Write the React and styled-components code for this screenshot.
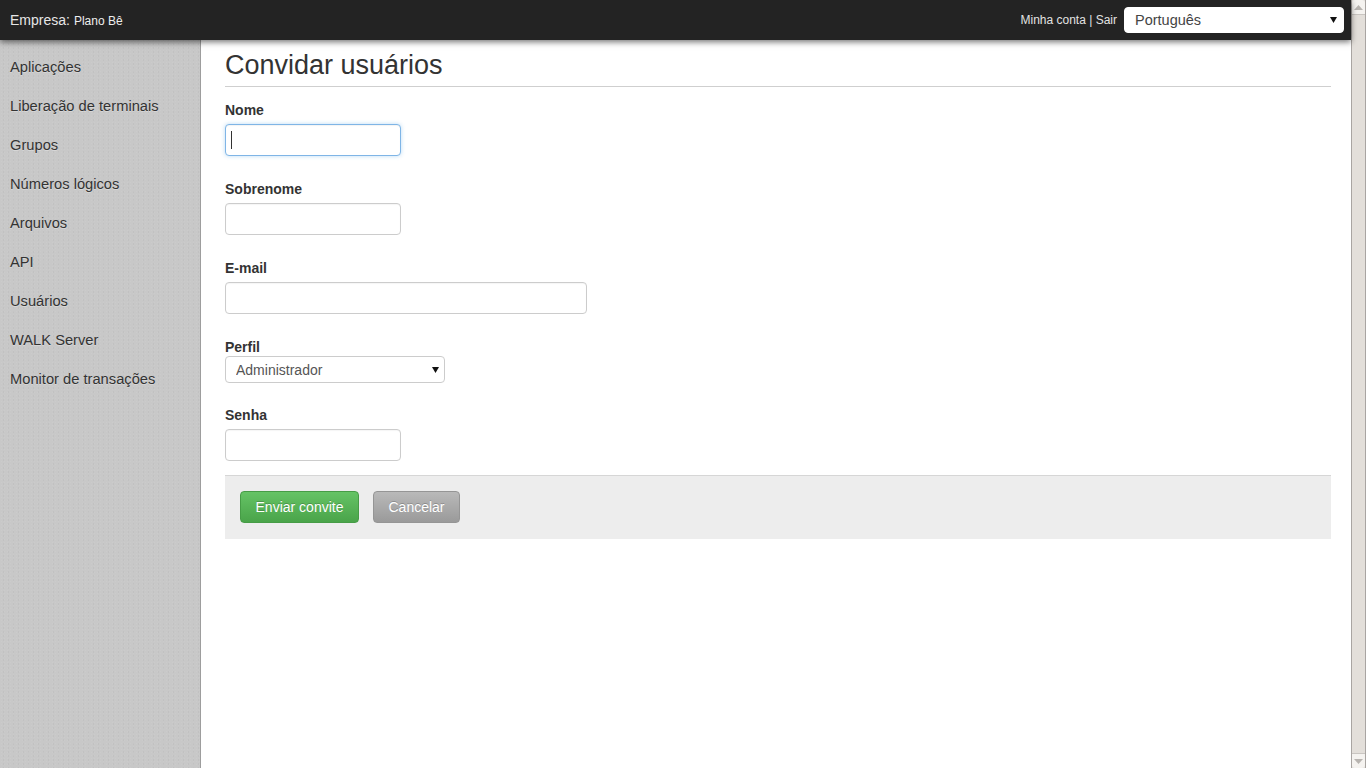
import React from "react";
import styled, { createGlobalStyle, css } from "styled-components";

const Global = createGlobalStyle`
  html, body { margin: 0; padding: 0; height: 100%; overflow: hidden; }
  body { font-family: "Liberation Sans", Arial, sans-serif; color: #333; background: #fff; }
  * { box-sizing: border-box; }
`;

const Shell = styled.div`
  display: flex;
  width: 1366px;
  height: 768px;
  overflow: hidden;
`;

const Page = styled.div`
  flex: 1;
  display: flex;
  flex-direction: column;
  min-width: 0;
`;

const Header = styled.header`
  position: relative;
  z-index: 2;
  height: 40px;
  flex: 0 0 40px;
  background: #232323;
  box-shadow: 0 2px 6px rgba(0, 0, 0, 0.55);
  display: flex;
  align-items: center;
  justify-content: space-between;
  padding: 0 7px 0 10px;
`;

const Brand = styled.div`
  color: #e6e6e6;
  font-size: 14px;
  display: flex;
  align-items: baseline;
  gap: 4px;
`;

const BrandName = styled.span`
  font-size: 12px;
  color: #eee;
`;

const HeaderRight = styled.div`
  display: flex;
  align-items: center;
  gap: 7px;
`;

const AccountLinks = styled.div`
  color: #e2e2e2;
  font-size: 12px;
`;

const SelectWrap = styled.div`
  position: relative;
  width: ${(p) => p.$w}px;
  height: ${(p) => p.$h}px;
`;

const NativeSelect = styled.select`
  appearance: none;
  -webkit-appearance: none;
  width: 100%;
  height: 100%;
  border: 1px solid #ccc;
  border-radius: 4px;
  background: #fff;
  font-family: "Liberation Sans", Arial, sans-serif;
  font-size: ${(p) => p.$fs || 14}px;
  color: ${(p) => p.$color || "#555"};
  padding: 0 0 0 ${(p) => p.$pad}px;
  outline: none;
  ${(p) =>
    p.$dark &&
    css`
      border-color: #fff;
    `}
`;

const Arrow = styled.svg`
  position: absolute;
  right: ${(p) => p.$r}px;
  top: 50%;
  margin-top: -3px;
  width: 7px;
  height: 6px;
  pointer-events: none;
`;

const Body = styled.div`
  flex: 1;
  display: flex;
  min-height: 0;
`;

const Sidebar = styled.nav`
  width: 201px;
  flex: 0 0 201px;
  background-color: #c8c8c8;
  background-image: radial-gradient(rgba(255, 255, 255, 0.06) 1px, transparent 1px),
    radial-gradient(rgba(0, 0, 0, 0.035) 1px, transparent 1px);
  background-size: 3px 3px, 5px 4px;
  background-position: 0 0, 1px 2px;
  border-right: 1px solid #9d9d9d;
  padding-top: 8px;
`;

const NavItem = styled.a`
  display: block;
  height: 39px;
  line-height: 39px;
  padding-left: 10px;
  font-size: 14.7px;
  color: #333;
  text-decoration: none;
  text-shadow: 0 1px 0 rgba(255, 255, 255, 0.3);
`;

const Main = styled.main`
  flex: 1;
  padding: 7px 20px 0 24px;
  min-width: 0;
`;

const Title = styled.h1`
  margin: 0 0 13px;
  font-size: 27px;
  font-weight: normal;
  line-height: 36px;
  color: #333;
  padding-bottom: 3px;
  border-bottom: 1px solid #cfcfcf;
`;

const Field = styled.div`
  display: flex;
  flex-direction: column;
  align-items: flex-start;
  margin-bottom: ${(p) => p.$mb}px;
`;

const Label = styled.label`
  font-size: 14px;
  font-weight: bold;
  line-height: 20px;
  color: #333;
  margin-bottom: ${(p) => p.$gap}px;
`;

const InputWrap = styled.div`
  position: relative;
`;

const TextInput = styled.input`
  display: block;
  width: ${(p) => p.$w}px;
  height: 32px;
  border: 1px solid #ccc;
  border-radius: 4px;
  padding: 0 6px;
  font-family: "Liberation Sans", Arial, sans-serif;
  font-size: 14px;
  color: #555;
  background: #fff;
  outline: none;
  box-shadow: inset 0 1px 1px rgba(0, 0, 0, 0.04);
  ${(p) =>
    p.$focused &&
    css`
      border-color: #7fb5e6;
      box-shadow: inset 0 1px 1px rgba(0, 0, 0, 0.05), 0 0 4px rgba(102, 175, 233, 0.45);
    `}
`;

const Caret = styled.span`
  position: absolute;
  left: 6px;
  top: 7px;
  width: 1px;
  height: 18px;
  background: #333;
  pointer-events: none;
`;

const Actions = styled.div`
  background: #ededed;
  border-top: 1px solid #d6d6d6;
  padding: 15px 15px 16px;
  display: flex;
  gap: 14px;
`;

const Button = styled.button`
  height: 32px;
  width: ${(p) => p.$w}px;
  padding: 0;
  border-radius: 4px;
  font-family: "Liberation Sans", Arial, sans-serif;
  font-size: 14px;
  color: #fff;
  text-shadow: 0 -1px 0 rgba(0, 0, 0, 0.2);
  cursor: pointer;
  ${(p) =>
    p.$variant === "success"
      ? css`
          background: linear-gradient(#65c365, #4aa44a);
          border: 1px solid #469c46;
        `
      : css`
          background: linear-gradient(#b9b9b9, #9a9a9a);
          border: 1px solid #959595;
        `}
`;

const Scrollbar = styled.div`
  width: 15px;
  flex: 0 0 15px;
  height: 768px;
  background: #e3dfda;
  border-left: 1px solid #a9a5a2;
  border-right: 1px solid #a9a5a2;
  display: flex;
  flex-direction: column;
  justify-content: space-between;
`;

const ScrollBtn = styled.div`
  height: 15px;
  background: #f5f3f0;
  border-radius: ${(p) => (p.$down ? "0 0 3px 3px" : "3px 3px 0 0")};
  border-${(p) => (p.$down ? "top" : "bottom")}: 1px solid #c9c5c1;
  display: flex;
  align-items: center;
  justify-content: center;
`;

const navItems = [
  "Aplicações",
  "Liberação de terminais",
  "Grupos",
  "Números lógicos",
  "Arquivos",
  "API",
  "Usuários",
  "WALK Server",
  "Monitor de transações",
];

function DownArrow({ r }) {
  return (
    <Arrow $r={r} viewBox="0 0 7 6">
      <path d="M0 0 H7 L3.5 6 Z" fill="#111" />
    </Arrow>
  );
}

export default function App() {
  return (
    <>
      <Global />
      <Shell>
        <Page>
          <Header>
            <Brand>
              Empresa:<BrandName>Plano Bê</BrandName>
            </Brand>
            <HeaderRight>
              <AccountLinks>Minha conta | Sair</AccountLinks>
              <SelectWrap $w={220} $h={26}>
                <NativeSelect $pad={10} $fs={14.5} $color="#444" $dark defaultValue="pt">
                  <option value="pt">Português</option>
                  <option value="en">English</option>
                </NativeSelect>
                <DownArrow r={7} />
              </SelectWrap>
            </HeaderRight>
          </Header>
          <Body>
            <Sidebar>
              {navItems.map((n) => (
                <NavItem key={n} href="#">
                  {n}
                </NavItem>
              ))}
            </Sidebar>
            <Main>
              <Title>Convidar usuários</Title>
              <Field $mb={23}>
                <Label $gap={4}>Nome</Label>
                <InputWrap>
                  <TextInput $w={176} $focused />
                  <Caret />
                </InputWrap>
              </Field>
              <Field $mb={23}>
                <Label $gap={4}>Sobrenome</Label>
                <TextInput $w={176} />
              </Field>
              <Field $mb={23}>
                <Label $gap={4}>E-mail</Label>
                <TextInput $w={362} />
              </Field>
              <Field $mb={22}>
                <Label $gap={-1}>Perfil</Label>
                <SelectWrap $w={220} $h={27}>
                  <NativeSelect $pad={10} defaultValue="admin">
                    <option value="admin">Administrador</option>
                    <option value="user">Usuário</option>
                  </NativeSelect>
                  <DownArrow r={6} />
                </SelectWrap>
              </Field>
              <Field $mb={14}>
                <Label $gap={4}>Senha</Label>
                <TextInput $w={176} type="password" />
              </Field>
              <Actions>
                <Button $variant="success" $w={119}>
                  Enviar convite
                </Button>
                <Button $w={87}>Cancelar</Button>
              </Actions>
            </Main>
          </Body>
        </Page>
        <Scrollbar>
          <ScrollBtn>
            <svg width="9" height="5" viewBox="0 0 9 5">
              <path d="M0 5 L4.5 0 L9 5 Z" fill="#b8b4b0" />
            </svg>
          </ScrollBtn>
          <ScrollBtn $down>
            <svg width="9" height="5" viewBox="0 0 9 5">
              <path d="M0 0 L4.5 5 L9 0 Z" fill="#b8b4b0" />
            </svg>
          </ScrollBtn>
        </Scrollbar>
      </Shell>
    </>
  );
}
